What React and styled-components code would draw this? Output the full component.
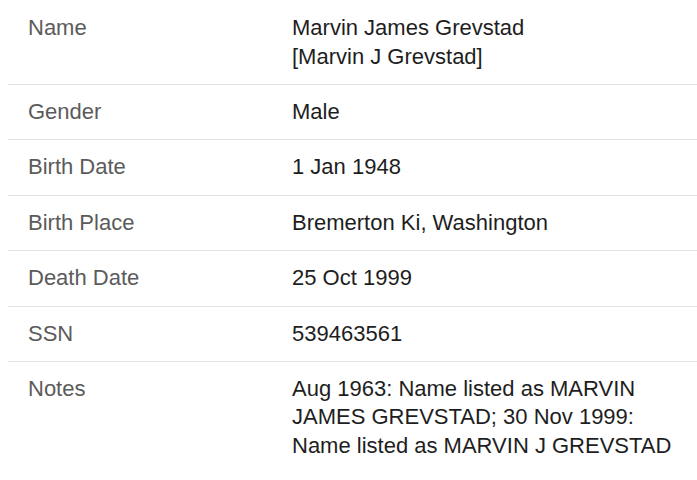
import React from "react";
import styled, { createGlobalStyle } from "styled-components";

const Global = createGlobalStyle`
  html, body { margin: 0; padding: 0; background: #fff; }
  body { font-family: "Liberation Sans", Arial, sans-serif; }
`;

const Table = styled.div`
  padding: 1.2px 0 0 8px;
  width: 689px;
`;

const Row = styled.div`
  display: grid;
  grid-template-columns: 284px 1fr;
  padding: 13px 20px 13px 0;
  border-bottom: ${(p) => (p.$last ? "none" : "1px solid #e2e2e2")};
`;

const Label = styled.div`
  padding-left: 20px;
  font-family: "Liberation Sans", Arial, sans-serif;
  font-size: 22px;
  line-height: 28px;
  color: #5b5b5b;
`;

const Value = styled.div`
  font-family: "Liberation Sans", Arial, sans-serif;
  font-size: 22px;
  line-height: 28.4px;
  color: #1e1e1e;
`;

const Line = styled.div``;

const rows = [
  ["Name", ["Marvin James Grevstad", "[Marvin J Grevstad]"]],
  ["Gender", ["Male"]],
  ["Birth Date", ["1 Jan 1948"]],
  ["Birth Place", ["Bremerton Ki, Washington"]],
  ["Death Date", ["25 Oct 1999"]],
  ["SSN", ["539463561"]],
  [
    "Notes",
    ["Aug 1963: Name listed as MARVIN JAMES GREVSTAD; 30 Nov 1999: Name listed as MARVIN J GREVSTAD"],
  ],
];

export default function App() {
  return (
    <>
      <Global />
      <Table>
        {rows.map(([label, lines], i) => (
          <Row key={label} $last={i === rows.length - 1}>
            <Label>{label}</Label>
            <Value>
              {lines.map((l, j) => (
                <Line key={j}>{l}</Line>
              ))}
            </Value>
          </Row>
        ))}
      </Table>
    </>
  );
}
